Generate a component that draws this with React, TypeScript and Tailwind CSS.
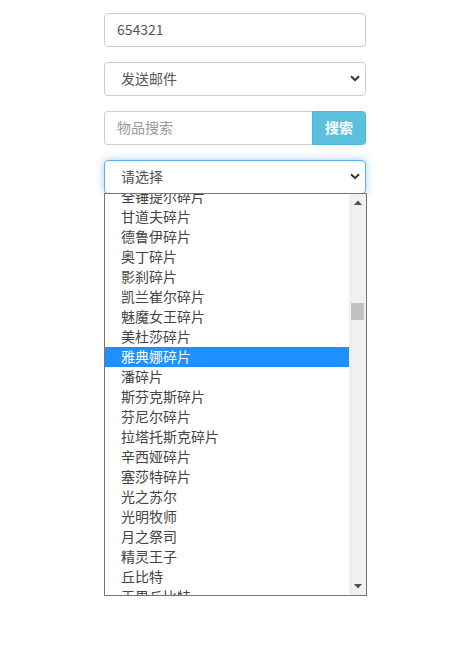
import React from "react";

const items = [
  "全锤提尔碎片",
  "甘道夫碎片",
  "德鲁伊碎片",
  "奥丁碎片",
  "影刹碎片",
  "凯兰崔尔碎片",
  "魅魔女王碎片",
  "美杜莎碎片",
  "雅典娜碎片",
  "潘碎片",
  "斯芬克斯碎片",
  "芬尼尔碎片",
  "拉塔托斯克碎片",
  "辛西娅碎片",
  "塞莎特碎片",
  "光之苏尔",
  "光明牧师",
  "月之祭司",
  "精灵王子",
  "丘比特",
  "天界丘比特",
];

const font = { fontFamily: '"Noto Sans CJK SC", "Noto Sans", sans-serif' };

function Chevron() {
  return (
    <svg width="10" height="7" viewBox="0 0 10 7" className="shrink-0">
      <path d="M1 1.2 L5 5.2 L9 1.2" fill="none" stroke="#333" strokeWidth="2" />
    </svg>
  );
}

export default function App() {
  return (
    <div className="min-h-[665px] w-[476px] bg-white pl-[104px] pt-[13px] text-[14px]" style={font}>
      <div className="flex w-[262px] flex-col gap-[15px]">
        <div className="flex h-[34px] items-center rounded-[4px] border border-[#ccc] px-[12px] pb-[1px] text-[#555]">
          654321
        </div>
        <div className="flex h-[34px] items-center justify-between rounded-[4px] border border-[#ccc] pb-[1px] pl-[16px] pr-[5px] text-[#555]">
          <span>发送邮件</span>
          <Chevron />
        </div>
        <div className="flex h-[34px]">
          <div className="flex flex-1 items-center rounded-l-[4px] border border-r-0 border-[#ccc] px-[12px] pb-[1px] text-[#999]">
            物品搜索
          </div>
          <div className="flex w-[54px] items-center justify-center rounded-r-[4px] border border-[#46b8da] bg-[#5bc0de] pb-[1px] font-bold text-white">
            搜索
          </div>
        </div>
        <div className="flex flex-col">
          <div className="flex h-[34px] items-center justify-between rounded-[4px] border border-[#66afe9] pb-[1px] pl-[16px] pr-[5px] text-[#555] shadow-[inset_0_1px_1px_rgba(0,0,0,0.075),0_0_8px_rgba(102,175,233,0.6)]">
            <span>请选择</span>
            <Chevron />
          </div>
          <div className="relative z-10 -mt-px flex h-[403px] w-[263px] border border-[#767676] bg-white">
            <div className="flex-1 overflow-hidden">
              <div className="-mt-[7px] flex flex-col">
                {items.map((t) => (
                  <div
                    key={t}
                    className={
                      "flex h-[20px] items-center pb-[2px] pl-[16px] leading-[18px] " +
                      (t === "雅典娜碎片" ? "bg-[#1e90ff] text-white" : "text-[#444]")
                    }
                  >
                    {t}
                  </div>
                ))}
              </div>
            </div>
            <div className="flex w-[17px] flex-col items-center bg-[#f0f0f0]">
              <div className="flex h-[17px] items-center justify-center">
                <svg width="8" height="5" viewBox="0 0 8 5">
                  <path d="M0 5 L4 0.5 L8 5 Z" fill="#505050" />
                </svg>
              </div>
              <div className="mt-[92px] h-[17px] w-[13px] bg-[#c1c1c1]" />
              <div className="flex-1" />
              <div className="flex h-[17px] items-center justify-center">
                <svg width="8" height="5" viewBox="0 0 8 5">
                  <path d="M0 0 L4 4.5 L8 0 Z" fill="#505050" />
                </svg>
              </div>
            </div>
          </div>
        </div>
      </div>
    </div>
  );
}
